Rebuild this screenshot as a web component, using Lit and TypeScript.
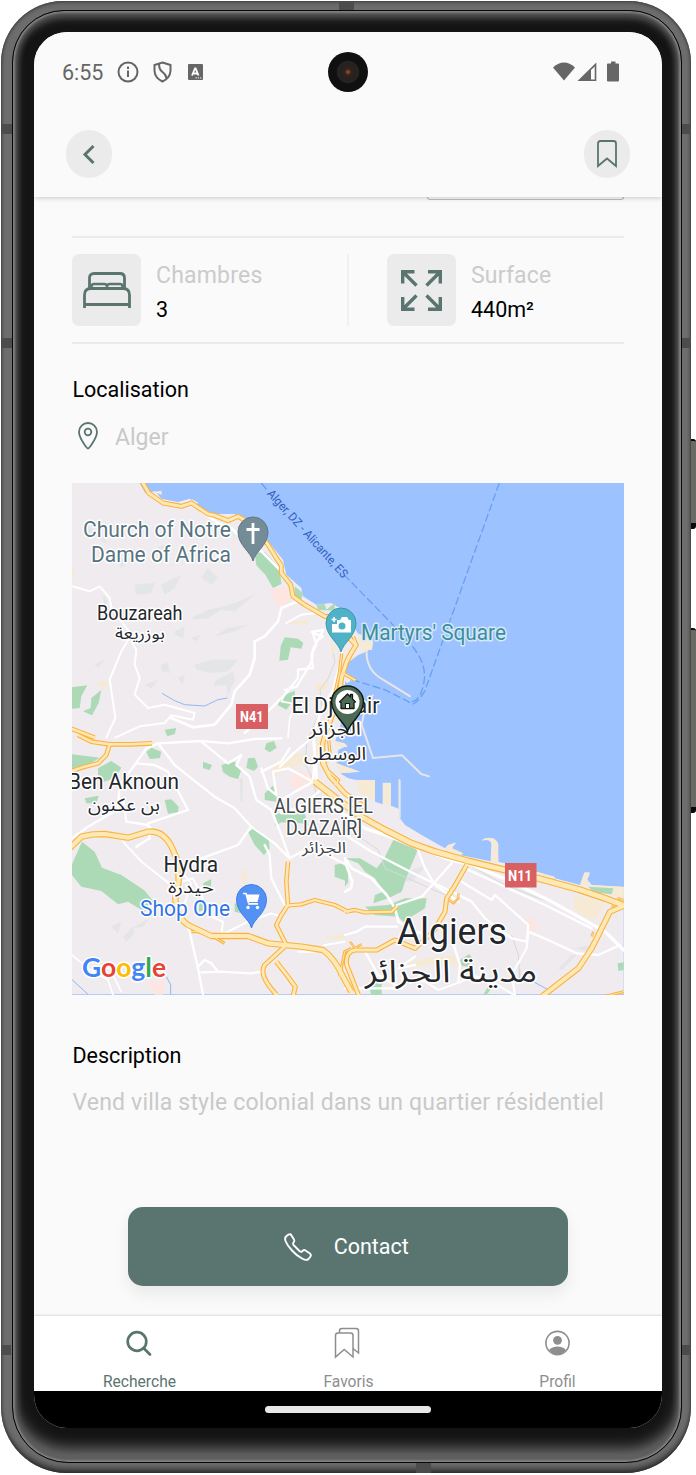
import { LitElement, html, svg, css } from 'lit';
import { customElement, property } from 'lit/decorators.js';

type Stroke = { ox: number; oy: number; d: string; w?: number };

// Map tiles share one 3x coordinate space; each tile has its own origin.
const NW = [0, 0], NE = [831, 0], SW = [0, 771], SE = [831, 771], MID = [636, 336];
const st = (o: number[], d: string, w?: number): Stroke => ({ ox: o[0], oy: o[1], d, w });

const LAND = `M12 15H215L232 45L262 40L280 62L330 72L365 62L392 82L400 98L430 108L500 108L535 128L600 190L645 245L655 290L700 330L705 355L745 380L790 375L830 400L872 470L881 486L906 496L912 511L894 521L871 531L841 551L831 581L861 604L836 616L822 666L818 740L801 791L841 801L811 816L806 856L876 881L816 886L841 901L866 906H921V971L944 979V914H969V983L994 993V903H996V1021L1011 1041L1061 1071L1131 1111L1140 1100L1165 1094L1148 1112L1160 1120L1176 1131L1268 1150L1270 1095Q1262 1080 1240 1090Q1255 1074 1280 1083L1291 1098L1291 1151L1311 1156L1406 1181L1461 1201L1536 1221L1550 1186L1566 1186L1558 1205L1571 1221L1667 1227V1549H12Z`;

const GREENS: Stroke[] = [
  st(NW, 'M560 225L590 222L635 270L640 318L615 330L592 290L565 262Z'),
  st(NW, 'M650 478L690 482L706 495L700 512L668 508L660 545L634 548L638 505Z'),
  st(NW, 'M680 325L705 345L700 365L680 350Z'),
  st(NW, 'M12 628L58 622L40 655L35 690L12 692Z'),
  st(NW, 'M70 660L100 636L92 675L72 712L45 700L68 690Z'),
  st(NW, 'M640 655L680 638L682 660L655 695L630 682Z'),
  st(NW, 'M290 755L325 750L320 768L298 775Z'),
  st(NW, 'M745 380L770 378L775 395L800 375L800 398L750 395Z'),
  st(SW, 'M12 58L95 68L60 90L25 96L12 105Z'),
  st(SW, 'M90 100L130 78L160 98L140 130L108 140L90 118Z'),
  st(SW, 'M50 190L92 182L85 205L55 205Z'),
  st(SW, 'M235 50L250 38L280 50L275 70L245 72Z'),
  st(SW, 'M290 195L310 193L332 215L330 232L300 236Z'),
  st(SW, 'M405 80L432 90L425 105L405 100Z'),
  st(SW, 'M460 90L500 80L520 105L510 132L485 125L465 112Z'),
  st(SW, 'M540 70L560 68L570 95L558 108L535 98Z'),
  st(SW, 'M595 25L618 18L626 38L605 52L590 42Z'),
  st(SW, 'M590 175L615 152L625 175L625 200L590 195Z'),
  st(SW, 'M620 235L710 237L722 270L700 265L640 262L622 272Z'),
  st(SW, 'M540 290L562 278L602 312L605 340L588 360L560 330Z'),
  st(SW, 'M12 388L42 320L80 350L102 398L160 420L228 465L258 500L230 530L180 500L150 508L100 468L40 455L12 420Z'),
  st(SW, 'M405 445L430 432L428 460L410 470Z'),
  st(SW, 'M395 490L412 495L408 525L392 530Z'),
  st(SW, 'M500 505L520 510L520 535L500 530Z'),
  st(SW, 'M800 390L840 380V440L800 425Z'),
  st(SE, 'M118 370L145 315L218 345L185 425L170 470L130 490L85 505L90 480L115 470L90 430L60 410L40 385L0 370L45 370L95 400Z'),
  st(SE, 'M180 490L245 490L240 520L175 560L160 545L90 540L60 515L130 510Z'),
  st(SE, 'M0 398L10 440L0 455Z'),
  st(SE, 'M345 675L372 658L388 675L370 695L350 692Z'),
  st(SE, 'M730 455L805 460L800 478L745 472Z'),
  st(SE, 'M818 685L836 682V705L820 708Z'),
  st(SE, 'M75 760L90 740L110 740V779H78Z'),
  st(SE, 'M415 779L430 752L440 760L425 779Z'),
];

const SHADES: Stroke[] = [
  st(NW, 'M60 145L100 170L120 200L90 180L60 175ZM150 230L175 255L160 270L145 245ZM200 320L260 315L250 345L205 350ZM105 350L120 370L110 390ZM280 320L340 290L320 330L290 350Z'),
  st(NW, 'M370 420L420 395L450 390L500 375L560 350L500 400L460 395L420 420L380 425ZM320 460L350 445L345 480L320 470ZM480 450L540 440L500 460L440 475ZM370 480L400 470L385 490Z'),
  st(NW, 'M380 560L430 545L510 545L480 580L430 585L385 575ZM440 610L495 580L500 605L480 650L475 620L440 625ZM280 560L300 555L305 585L280 578ZM230 620L270 605L250 632Z'),
  st(NW, 'M80 560L110 545L90 570ZM330 600L350 590L345 620ZM420 270L450 300L430 320L400 300ZM265 210L290 200L280 230Z'),
  st(SW, 'M130 575L160 560L150 595ZM165 605L195 575L200 595L175 620ZM190 580L245 550L225 575ZM515 130L525 130L523 200L518 200Z'),
  st(SE, 'M160 435L210 400L240 395L200 440ZM640 700L680 660L700 655L650 705ZM690 640L760 625L725 650Z'),
];

const SANDS: Stroke[] = [
  st(NW, 'M88 612L120 608V625L108 622V640L92 620ZM12 265L20 275L14 300ZM370 62L392 75L380 80ZM255 42L280 38L282 50ZM655 435L720 425V440L660 438Z'),
  st(MID, 'M235 130L280 152L276 180L262 178L250 186L240 165ZM152 150L168 170L155 205ZM105 285L145 270L140 300L105 300ZM200 200L232 195L205 218Z'),
  st(MID, 'M105 440L125 445L115 500L95 470ZM165 452L205 462L200 472L165 465ZM170 520L240 545L180 550ZM40 490L90 495L70 525L30 515Z'),
  st(MID, 'M230 570H285V630L240 615ZM309 580H333V648L309 640ZM356 568H359V655H356Z'),
  st(SW, 'M610 85L700 65L720 85L660 100L620 125ZM520 410L538 405L532 470L522 430ZM770 605L835 598V612L775 612Z'),
  st(SE, 'M300 340L330 322L322 340L355 355L345 362L305 350ZM440 315L410 314Q440 300 458 322L460 385L437 380L445 345ZM575 410L630 425L625 435L580 425ZM705 450L718 412L735 412L722 430L740 452ZM690 480L780 505L755 550L720 548L685 520ZM740 450L836 455V490L760 472Z'),
  st(SE, 'M180 690L250 668L330 660L345 690L280 685L190 700Z'),
];

const PINKS: Stroke[] = [
  st(NW, 'M608 335L660 325L668 370L640 392L620 372Z'),
  st(SW, 'M665 125L690 105L735 115L740 140L700 165L668 155Z'),
  st(SW, 'M235 738L290 740L285 779H260Z'),
  st(SE, 'M540 550L565 545L582 580L560 590L545 575Z'),
];

const WATER: Stroke[] = [
  st(MID, 'M210 270L260 285L248 405L228 460L205 470L178 445L200 395L215 330ZM178 492L245 500L270 535L235 542L190 522Z'),
  st(NE, 'M0 610L12 622L5 640L0 640Z'),
];

const STREETS: Stroke[] = [
  st(NW, 'M12 325L65 340L95 325L125 360L130 390L190 470L160 520L125 605L142 720L115 779', 6),
  st(NW, 'M190 490L205 515L200 560L215 600L200 650L240 690L290 680L380 705L375 725L310 712L290 735L215 745L142 779', 6),
  st(NW, 'M310 720L375 748L440 740L490 680L500 640L545 590L560 540L560 490L590 475L630 430L640 390L690 370', 8),
  st(NW, 'M400 100L450 135L490 150L510 170M575 215L640 280', 8),
  st(NW, 'M530 765L610 690L650 650L690 600L690 575L735 570L730 530L745 500L735 465L765 475L745 490', 7),
  st(NW, 'M655 435L700 410L745 405L800 420', 6),
  st(NW, 'M660 630L640 670L690 680L665 720L660 779', 5),
  st(MID, 'M185 185L180 225L160 300L120 370L100 440L105 495L110 570', 9),
  st(MID, 'M105 130L95 125L130 120L100 175L95 215L50 290L15 300M0 530L40 490L100 440', 7),
  st(SW, 'M12 310L60 275L130 235L150 215L155 150L200 90L235 40L270 25L400 18L480 25L560 12L640 10', 7),
  st(SW, 'M205 85L260 90L300 110L360 225L240 265L245 310L205 335', 7),
  st(SW, 'M165 190L175 260L240 270L260 295', 7),
  st(SW, 'M270 25L320 90L370 130L440 185L500 220L550 275L510 330L400 370L340 400', 7),
  st(SW, 'M550 275L620 325L665 370L700 350L760 350L835 390', 7),
  st(SW, 'M400 20L480 85L520 60L505 90L545 125L565 195L610 225L640 300L665 370', 7),
  st(SW, 'M580 110L640 80L665 40M580 100L600 160L625 180L615 110L660 100L735 140L740 60', 7),
  st(SW, 'M735 140L700 160L640 195L640 235L700 215L770 155', 7),
  st(SW, 'M590 330L605 360L610 430L650 510', 7),
  st(SW, 'M165 320L220 380L310 450M340 440L375 430L400 480L420 540L465 560L460 600M340 410L370 445L345 520M460 600L540 560L610 535L640 545', 6),
  st(SW, 'M345 550L365 590L390 700L405 779M390 695L410 675L430 685L450 710L550 715L580 710M400 712L470 710', 7),
  st(SW, 'M12 660L60 700L120 735L135 779M85 700L125 700L160 770', 5),
  st(SW, 'M690 650L740 650L770 630L830 620', 6),
  st(SE, 'M0 300L80 350L215 420L300 460L380 500L420 550L500 610L545 620L550 570L450 480L440 495L350 440', 7),
  st(SE, 'M-80 190L0 240L60 280L210 330L300 370L380 390L500 440L620 500L780 590L836 645', 10),
  st(SE, 'M215 335L240 400L270 450L340 500M320 385L230 485L155 510M370 405L600 510L740 580', 7),
  st(SE, 'M0 370L20 400L80 430L125 480L150 520L160 560L210 590L260 600M0 380L22 440L18 460L0 470', 8),
  st(SE, 'M0 600L35 590L60 575L155 575M60 650L100 720L170 760L0 760M210 665L160 700L210 690', 7),
  st(SE, 'M170 730L240 740L280 765L350 740L380 720L440 740L505 779M550 590L545 640L500 720L510 779', 6),
  st(SE, 'M550 590L610 615L695 655L760 660L815 635M320 610L345 690L340 740', 7),
];

const RAILS: Stroke[] = [
  st(MID, 'M160 190L165 215L145 265L120 300L125 350L80 460L75 520L100 570L110 620'),
  st(SE, 'M0 290L50 310L100 345L120 400L200 435L300 480M380 395L480 450L570 485L640 510L710 550M500 600L520 660L525 740'),
];

const ROADS: Stroke[] = [
  st(NW, 'M222 10L242 45L285 75L340 85L370 75L420 108L440 112L480 128L510 115L545 135L600 200L625 240L640 262L640 285L668 320L675 355L710 380L770 415L835 420', 14),
  st(MID, 'M195 130L228 165L210 195L200 215L185 260L175 330L140 420L128 460L128 520L150 560L195 610L260 655', 15),
  st(MID, 'M128 500L142 540L175 570L165 585M220 140L230 165L205 200L190 250L225 270', 10),
  st(MID, 'M185 190L178 250L160 330M145 440L150 490L130 520', 9),
  st(NW, 'M5 750L80 779', 13),
  st(SW, 'M30 0L70 20L125 28L190 28L252 25M125 28L115 60L90 85L50 95L5 110', 13),
  st(SW, 'M5 340L40 305L75 298L110 297L180 308L240 290Q290 285 315 345L330 380L332 440L322 490Q325 555 370 575L430 603L540 603L600 625L700 635L765 645Q800 670 825 725L850 770', 18),
  st(SW, 'M660 380L655 440L660 510L640 540L625 570L655 630', 13),
  st(SW, 'M655 512L700 508L740 495L800 510L840 530', 12),
  st(SW, 'M650 635L590 690Q570 720 625 779M625 680L660 725L682 755L675 785', 14),
  st(SW, 'M370 590L410 590L470 625M815 725L830 650L850 640', 8),
  st(SE, 'M-90 140L-20 195L40 240L120 285L200 325L270 350L370 378L480 405L580 430L700 463L780 490L838 512', 20),
  st(SE, 'M0 530L30 525L60 532L140 530L155 515', 12),
  st(SE, 'M365 390L325 460L305 490L300 530L265 590L210 640L150 615L95 645L30 645Q0 650 5 690L40 779', 14),
  st(SE, 'M838 512L795 530L770 580L740 640L700 700L590 785', 17),
  st(SE, 'M305 490L325 505L340 490V475M315 460L322 480M745 590L740 605M765 600L755 618M800 520L820 490L836 495M15 620L30 640L50 628', 6),
  st(SE, 'M775 785L836 770', 8),
];

const place = (s: Stroke) => `translate(${s.ox} ${s.oy})`;
const area = (list: Stroke[], cls: string) =>
  list.map((s) => svg`<path class=${cls} transform=${place(s)} d=${s.d}></path>`);
const line = (list: Stroke[], cls: string, grow = 0) =>
  list.map((s) => svg`<path class=${cls} transform=${place(s)} d=${s.d} stroke-width=${Math.max(2, (s.w ?? 3) + grow)}></path>`);

@customElement('city-map')
class CityMap extends LitElement {
  static styles = css`
    :host { display: block; height: 511.5px; overflow: hidden; background: #9cc2ff; }
    svg { display: block; width: 551.5px; height: 511.5px; }
    .land { fill: #efebef; }
    .green { fill: #acdab6; }
    .shade { fill: #dde2e2; opacity: .65; }
    .sand { fill: #f6ead4; }
    .pink { fill: #fde5e2; }
    .water { fill: #9cc2ff; }
    .rail { fill: none; stroke: #d4dadb; }
    .street, .case, .road { fill: none; stroke-linejoin: round; stroke-linecap: round; }
    .street { stroke: #fff; }
    .case { stroke: #fbb23f; stroke-linecap: butt; }
    .road { stroke: #fee9b5; }
    .stream { fill: none; stroke: #80acf4; stroke-width: 2.5; }
    .ferry { fill: none; stroke: #6a9ff6; stroke-width: 4; stroke-dasharray: 24 9; }
    .pier { fill: none; stroke: #e7e6e4; stroke-width: 6; }
    text {
      font-family: Roboto, "Noto Sans", sans-serif;
      paint-order: stroke; stroke: #fff; stroke-width: 3px; stroke-linejoin: round;
      fill: #24272b;
    }
    .ar { font-family: "Noto Sans Arabic", "Noto Sans", "DejaVu Sans", sans-serif; }
    .church { fill: #56747f; }
    .square { fill: #3b8e9b; stroke: #d7e8fb; }
    .shop { fill: #2f74e6; }
    .muted { fill: #43474c; }
    .route { fill: #3160bd; stroke: none; }
    .shield { fill: #d86063; }
    .shield-text { fill: #fff; stroke: none; font-weight: 700; }
    .logo { font-family: Lato, sans-serif; font-weight: 700; }
    .b { fill: #4285f4; } .r { fill: #ea4335; } .y { fill: #fbbc05; } .g { fill: #34a853; }
  `;

  render() {
    return html`
      <svg viewBox="0 0 551.5 511.5">
        <g transform="translate(-4 -5) scale(.333333)">
          <path class="land" d=${LAND}></path>
          ${area(SHADES, 'shade')} ${area(SANDS, 'sand')} ${area(PINKS, 'pink')}
          ${area(GREENS, 'green')} ${area(WATER, 'water')}
          <path class="stream" d="M282 646L320 668L350 680L410 684L450 665L478 660M12 1505L60 1549M295 1496L308 1520V1549M1355 1473V1510M1395 1510L1440 1535"></path>
          <path class="pier" d="M896 515Q892 575 945 605L1028 656M915 650L887 710L881 740L915 840L1002 832L1060 888L1085 896M995 905V1020"></path>
          <path class="ferry" d="M580 15L600 40M828 290L960 425L1020 490Q1085 560 1065 625Q1055 675 1020 672M1294 15L1070 640Q1050 672 1035 678L950 635L862 608"></path>
          ${line(RAILS, 'rail')}
          ${line(STREETS, 'street')}
          ${line(ROADS, 'case', 1)}
          ${line(ROADS, 'road', -5.5)}
        </g>

        <text class="route" font-size="12" textLength="114" lengthAdjust="spacingAndGlyphs" transform="translate(194.500 11) rotate(48)">Alger, DZ - Alicante, ES</text>

        <text class="church" font-size="22" x="11" y="54" textLength="148" lengthAdjust="spacingAndGlyphs">Church of Notre</text>
        <text class="church" font-size="22" x="19" y="78.500" textLength="140" lengthAdjust="spacingAndGlyphs">Dame of Africa</text>
        <text font-size="19.500" x="25" y="136.500" textLength="85.500" lengthAdjust="spacingAndGlyphs">Bouzareah</text>
        <text class="ar" font-size="16" x="43" y="156" textLength="50" lengthAdjust="spacingAndGlyphs">بوزريعة</text>
        <text class="square" font-size="22.500" x="289" y="157" textLength="145" lengthAdjust="spacingAndGlyphs">Martyrs' Square</text>
        <text font-size="22" x="219.500" y="230" textLength="88" lengthAdjust="spacingAndGlyphs">El Djazair</text>
        <text class="ar" font-size="18" x="237" y="252" textLength="52" lengthAdjust="spacingAndGlyphs">الجزائر</text>
        <text class="ar" font-size="18" x="232" y="277" textLength="62" lengthAdjust="spacingAndGlyphs">الوسطى</text>
        <text font-size="22.500" x="-4" y="306" textLength="111" lengthAdjust="spacingAndGlyphs">Ben Aknoun</text>
        <text class="ar" font-size="18" x="16" y="328" textLength="72" lengthAdjust="spacingAndGlyphs">بن عكنون</text>
        <text class="muted" font-size="19.500" x="202" y="330" textLength="99" lengthAdjust="spacingAndGlyphs">ALGIERS [EL</text>
        <text class="muted" font-size="19.500" x="214" y="351.500" textLength="76" lengthAdjust="spacingAndGlyphs">DJAZAÏR]</text>
        <text class="ar muted" font-size="15.500" x="230" y="370" textLength="44" lengthAdjust="spacingAndGlyphs">الجزائر</text>
        <text font-size="22.500" x="91.500" y="388.500" textLength="54.500" lengthAdjust="spacingAndGlyphs">Hydra</text>
        <text class="ar" font-size="16" x="96" y="410" textLength="46" lengthAdjust="spacingAndGlyphs">حيدرة</text>
        <text class="shop" font-size="22.500" x="68" y="433" textLength="90" lengthAdjust="spacingAndGlyphs">Shop One</text>
        <text font-size="37.500" x="325" y="461" textLength="110" lengthAdjust="spacingAndGlyphs">Algiers</text>
        <text class="ar" font-size="31" x="293" y="499" textLength="172" lengthAdjust="spacingAndGlyphs">مدينة الجزائر</text>

        <rect class="shield" x="164" y="221" width="32" height="25"></rect>
        <text class="shield-text" font-size="15" x="168" y="239" textLength="23.500" lengthAdjust="spacingAndGlyphs">N41</text>
        <rect class="shield" x="433" y="380" width="31.500" height="24.500"></rect>
        <text class="shield-text" font-size="15" x="436" y="398" textLength="24" lengthAdjust="spacingAndGlyphs">N11</text>

        <g transform="translate(181 78)">
          <path fill="#748c98" stroke="#5f7883" d="M0 0C-2-9-15-16-15-29A15 15 0 0 1 15-29C15-16 2-9 0 0Z"></path>
          <path fill="none" stroke="#fff" stroke-width="2.800" d="M0-38V-17M-6.500-31.500H6.500"></path>
        </g>
        <g transform="translate(269 169)">
          <path fill="#4fb2c7" stroke="#3c9aae" d="M0 0C-2-9-15-16-15-29A15 15 0 0 1 15-29C15-16 2-9 0 0Z"></path>
          <path fill="#fff" d="M-9-28h5v-4h3l2-3h5l2 3h2v12.500H-9Z"></path>
          <circle cx="1" cy="-26" r="3.500" fill="#4fb2c7"></circle>
          <path stroke="#fff" stroke-width="1.500" d="M-9.500-32.500h5M-7-35v5"></path>
        </g>
        <g transform="translate(179.500 445)">
          <path fill="#5491f5" stroke="#3d7de4" d="M0 0C-2-9-15-15-15-28.500A15 15 0 0 1 15-28.500C15-15 2-9 0 0Z"></path>
          <path fill="#fff" d="M-5-33.500H8L6-26H-3ZM-3-25H6.500v1.800H-3.500Z"></path>
          <path fill="none" stroke="#fff" stroke-width="1.600" d="M-8.500-34.500h3L-3-25"></path>
          <circle cx="-3.500" cy="-20.500" r="1.700" fill="#fff"></circle><circle cx="6" cy="-20.500" r="1.700" fill="#fff"></circle>
        </g>
        <g transform="translate(275.500 248)">
          <path fill="#4d6b54" stroke="#131a15" stroke-width="1.500" d="M0 0C-2.500-8-16-17-16-29A16 16 0 0 1 16-29C16-17 2.500-8 0 0Z"></path>
          <circle cy="-29" r="12" fill="#fff"></circle>
          <path fill="#4d6b54" stroke="#131a15" stroke-width="1.300" stroke-linejoin="round" d="M-8-29L0-37L3-34V-36.500H5V-32L8-29L6.500-28.500V-22.500H-6.500V-28.500Z"></path>
          <rect x="-2" y="-27.500" width="4" height="5" fill="#fff" stroke="#131a15"></rect>
        </g>

        <text class="logo" font-size="27.500" x="10" y="494" textLength="84" lengthAdjust="spacingAndGlyphs"><tspan class="b">G</tspan><tspan class="r">o</tspan><tspan class="y">o</tspan><tspan class="b">g</tspan><tspan class="g">l</tspan><tspan class="r">e</tspan></text>
      </svg>
    `;
  }
}

@customElement('fact-item')
class FactItem extends LitElement {
  @property() label = '';
  @property() value = '';
  static styles = css`
    :host { display: flex; flex: 0 0 275px; gap: 15px; align-items: center; height: 72px; }
    .tile { width: 69px; height: 72px; border-radius: 7px; background: #ebebeb; display: grid; place-items: center; }
    .copy { display: flex; flex-direction: column; padding-top: 3px; }
    .label { font-size: 23px; line-height: 35px; color: #cbcbcb; letter-spacing: .2px; }
    .value { font-size: 21.500px; line-height: 33px; color: #000; }
  `;
  render() {
    return html`
      <div class="tile"><slot></slot></div>
      <div class="copy"><span class="label">${this.label}</span><span class="value">${this.value}</span></div>
    `;
  }
}

@customElement('app-root')
class AppRoot extends LitElement {
  static styles = css`
    :host { display: block; width: 696px; height: 1475px; background: #fff; font-family: Roboto, "Noto Sans", sans-serif; }
    * { box-sizing: border-box; }
    svg { display: block; overflow: visible; }
    .stage { position: relative; height: 1475px; padding: 1px 5px 2px 1px; overflow: hidden; }
    .frame {
      height: 1472px; padding: 8.500px 9px 10.500px 10.500px; border-radius: 62px 62px 66px 66px;
      background: #6d6d6d;
      box-shadow: inset 0 0 3px #2c2c2c, inset 0 -7px 6px -3px #2e2e2e, inset 0 3px 4px -1px #555;
    }
    .rim {
      height: 100%; padding: 21.500px 18.500px 33.500px 21.500px; border: 1.500px solid #080808; border-radius: 52px 52px 56px 56px;
      background: #141414;
      box-shadow: inset 0 0 2px 2px #808080, inset 0 0 6px 4px #565656, inset 0 -15px 15px -2px #747474, inset 0 7px 8px #4e4e4e;
    }
    .screen { display: flex; flex-direction: column; width: 628px; height: 1396px; border-radius: 33px; overflow: hidden; background: #fafafa; }
    .mark { position: absolute; background: #4c4c4c; }
    .m1 { left: 2px; top: 124px; width: 10px; height: 10px; }
    .m2 { left: 2px; top: 338px; width: 10px; height: 10px; }
    .m3 { left: 2px; top: 1345px; width: 9px; height: 10px; }
    .m4 { left: 682px; top: 124px; width: 9px; height: 10px; }
    .m5 { left: 682px; top: 338px; width: 9px; height: 10px; }
    .m6 { left: 682px; top: 1345px; width: 8px; height: 10px; }
    .m7 { left: 339px; top: 2px; width: 15px; height: 8px; }
    .m8 { left: 416px; top: 1463px; width: 15px; height: 10px; }
    .key { position: absolute; left: 691px; width: 5px; border-radius: 0 3px 3px 0; background: #6b6b66; border: solid #0a0a0a; border-width: 2px 0 6px; }
    .k1 { top: 439px; height: 90px; }
    .k2 { top: 628px; height: 185px; }

    .top { position: relative; z-index: 1; height: 164.500px; background: #fafafa; box-shadow: 0 1px 5px rgba(0,0,0,.2); flex: none; }
    .status { display: grid; grid-template-columns: 1fr 40px 1fr; align-items: center; height: 80px; padding: 0 28px; color: #666; }
    .left { display: flex; align-items: center; font-size: 21.500px; }
    .left svg { margin-left: 14px; }
    .left svg.box { margin-left: 16px; }
    .right { display: flex; justify-content: flex-end; padding-right: 14px; }
    .camera { display: grid; place-items: center; width: 40px; height: 40px; border-radius: 50%; background: radial-gradient(circle, #8a4a2a 0 1px, #33221c 3px, #24211f 8px, #262626 10px, #101010 12px); }
    .bar { display: flex; justify-content: space-between; padding: 18px 32px 0; }
    .round { width: 46px; height: 48px; border-radius: 23px; background: #ebebeb; display: grid; place-items: center; }
    .content { display: flex; flex-direction: column; padding: 0 38.500px 0 38px; flex: 1; }
    .peek { align-self: flex-end; width: 197px; height: 3px; border: solid #bdbdbd; border-width: 0 1.500px 1.500px; border-radius: 0 0 6px 6px; }
    .facts { display: flex; margin-top: 36.500px; padding-top: 16px; height: 107.500px; border: solid #ebebeb; border-width: 2px 0; }
    .split { flex: none; width: 2px; margin-right: 38px; background: #f0f0f0; height: 72px; }
    h2 { margin: 0; font-size: 21.500px; font-weight: 400; line-height: 30px; color: #000; padding-left: .5px; }
    .place { display: flex; align-items: center; gap: 17.500px; padding-left: 5.500px; height: 30px; margin: 17px 0 31.500px; color: #c9c9c9; font-size: 23px; }
    .place svg { margin-top: -2px; }
    .place span { padding-top: 1px; }
    .loc { margin-top: 31px; }
    .desc { margin-top: 46px; }
    p { margin: 17px 0 0; padding-left: .5px; color: #c9c9c9; font-size: 23px; letter-spacing: .18px; line-height: 30px; white-space: nowrap; }
    .cta {
      align-self: center; display: flex; align-items: center; justify-content: center; gap: 22px;
      width: 440px; height: 79px; margin-top: 89px; border-radius: 15px; background: #5a756f; color: #fff; font-size: 21.500px;
      padding: 1px 3px 0 0; box-shadow: 0 8px 16px rgba(0,0,0,.07);
    }
    .tabs { display: grid; grid-template-columns: repeat(3, 1fr); height: 75px; flex: none; background: #fff; box-shadow: 0 -1px 2px rgba(0,0,0,.12); padding-left: 1px; }
    .tab { display: flex; flex-direction: column; align-items: center; padding-top: 9px; font-size: 15.600px; line-height: 20px; color: #8e8e8e; }
    .tab svg { margin: 0 2px 11px 0; }
    .on { color: #5a756f; }
    .nav { display: flex; justify-content: center; height: 37px; padding-top: 15px; background: #000; flex: none; }
    .pill { width: 166px; height: 7px; border-radius: 4px; background: #e8e8e8; }
  `;

  render() {
    return html`
      <div class="stage">
        <div class="frame"><div class="rim"><div class="screen">
          <div class="top">
            <div class="status">
              <div class="left"><span>6:55</span>
                <svg width="22" height="22" viewBox="0 0 22 22" fill="none" stroke="#666" stroke-width="2"><circle cx="11" cy="11" r="9.500"></circle><path d="M11 9.500V16M11 5.500V8"></path></svg>
                <svg width="19" height="22" viewBox="0 0 19 22" fill="none" stroke="#666" stroke-width="2"><path d="M9.500 1.500L17.500 4V10Q17 17 9.500 20.500Q2 17 1.500 10V4ZM6 3L6.500 7Q7 9 10 11.500Q13 13.500 13.500 17.500"></path></svg>
                <svg class="box" width="15" height="16" viewBox="0 0 15 16"><rect width="15" height="16" rx="1" fill="#666"></rect><path fill="none" stroke="#fff" stroke-width="1.800" d="M4 11.500L7 4.500H7.600L10.500 11.500M5 9.500H9.500"></path><path stroke="#ddd" stroke-width="1.200" stroke-dasharray="1.300 1" d="M7.500 13.800H13.500"></path></svg>
              </div>
              <div class="camera"></div>
              <div class="right">
                <svg width="67" height="22" viewBox="0 0 67 22" fill="#666"><path d="M0 6.500Q11-3.500 22 6.500L11 19.500Z"></path><path d="M24.500 20L43.300 1.500V20Z"></path><path d="M38 9L41.700 5.500V18.500H38Z" fill="#fafafa"></path><path d="M54 3.500Q54 2.500 55 2.500H58V.5H62.500V2.500H65Q66 2.500 66 3.500V19Q66 20.500 65 20.500H55Q54 20.500 54 19.500Z"></path></svg>
              </div>
            </div>
            <div class="bar">
              <div class="round"><svg width="12" height="19" viewBox="0 0 12 19" fill="none" stroke="#5a756f" stroke-width="3"><path d="M10.500 1L2 9.500L10.500 18"></path></svg></div>
              <div class="round"><svg width="20" height="28" viewBox="0 0 20 28" fill="none" stroke="#5a756f" stroke-width="1.800"><path d="M1 3.500Q1 1 3.500 1H16.500Q19 1 19 3.500V26L10 18.500L1 26Z"></path></svg></div>
            </div>
          </div>
          <div class="content">
            <div class="peek"></div>
            <div class="facts">
              <fact-item label="Chambres" value="3">
                <svg width="48" height="36" viewBox="0 0 48 36" fill="none" stroke="#5a756f" stroke-width="2.800"><path d="M6.500 17V6Q6.500 1.500 11 1.500H37Q41.500 1.500 41.500 6V17"></path><path d="M1.500 36V23Q1.500 16.500 8 16.500H40Q46.500 16.500 46.500 23V36M1.500 32.500H46.500"></path><path d="M8.500 16V14.500Q8.500 12 11 12H21Q24 12 24 14.500Q24 12 27 12H37Q39.500 12 39.500 14.500V16M24 13.500V16" stroke-width="2.500"></path></svg>
              </fact-item>
              <div class="split"></div>
              <fact-item label="Surface" value="440m²">
                <svg width="41" height="41" viewBox="0 0 41 41" fill="none" stroke="#5a756f" stroke-width="3.400"><path d="M1.700 13.500V1.700H13.500M1.700 1.700L15.500 15.500M27 1.700H39.300V13.500M39.300 1.700L25.500 15.500M1.700 27V39.300H13.500M1.700 39.300L15.500 25.500M27 39.300H39.300V27M39.300 39.300L25.500 25.500"></path></svg>
              </fact-item>
            </div>
            <h2 class="loc">Localisation</h2>
            <div class="place">
              <svg width="20" height="28" viewBox="0 0 20 28" fill="none" stroke="#5a756f" stroke-width="1.800"><path d="M10 26.500C9 26.500 1 16 1 10A9 9 0 0 1 19 10C19 16 11 26.500 10 26.500Z"></path><circle cx="10" cy="10" r="3.300"></circle></svg>
              <span>Alger</span>
            </div>
            <city-map></city-map>
            <h2 class="desc">Description</h2>
            <p>Vend villa style colonial dans un quartier résidentiel</p>
            <div class="cta">
              <svg width="28" height="28" viewBox="0 0 28 28" fill="none" stroke="#fff" stroke-width="1.900" stroke-linejoin="round"><path d="M2 3.500L4.500 1.500Q6.500 .5 7.500 2.500L10 6.500Q11 8 9.500 9.500Q8.500 10.500 9.500 12L15.500 18Q17.500 19.500 18.500 18Q20 16.500 21.500 17.500L26 20.500Q27.500 22 26.500 23.500L24.500 26Q22.500 28 18 25.500Q12.500 22.500 8 17.500Q3.500 13 1.500 8Q.5 5 2 3.500Z"></path></svg>
              <span>Contact</span>
            </div>
          </div>
          <div class="tabs">
            <div class="tab on"><svg width="36" height="36" viewBox="0 0 36 36" fill="none" stroke="#5a756f" stroke-width="2.700" stroke-linecap="round"><circle cx="16" cy="16.500" r="9.300"></circle><path d="M23 23.500L29 29.500"></path></svg>Recherche</div>
            <div class="tab"><svg width="36" height="36" viewBox="0 0 36 36" fill="none" stroke="#8e8e8e" stroke-width="1.500"><path d="M5.500 10.500Q5.500 8 8 8H20.500Q23 8 23 10.500V32L14.200 24.500L5.500 32Z"></path><path d="M9.500 8V6Q9.500 3.500 12 3.500H26Q28.500 3.500 28.500 6V28L23 23.500"></path></svg>Favoris</div>
            <div class="tab"><svg width="36" height="36" viewBox="0 0 36 36"><circle cx="18.500" cy="18" r="11.600" fill="none" stroke="#8e8e8e" stroke-width="1.600"></circle><circle cx="18.500" cy="15.300" r="4.400" fill="#8e8e8e"></circle><path fill="#8e8e8e" d="M10 25Q13 21.500 18.500 21.500T27 25Q23.500 29.500 18.500 29.500T10 25Z"></path></svg>Profil</div>
          </div>
          <div class="nav"><div class="pill"></div></div>
        </div></div></div>
        <i class="mark m1"></i><i class="mark m2"></i><i class="mark m3"></i><i class="mark m4"></i>
        <i class="mark m5"></i><i class="mark m6"></i><i class="mark m7"></i><i class="mark m8"></i>
        <i class="key k1"></i><i class="key k2"></i>
      </div>
    `;
  }
}
